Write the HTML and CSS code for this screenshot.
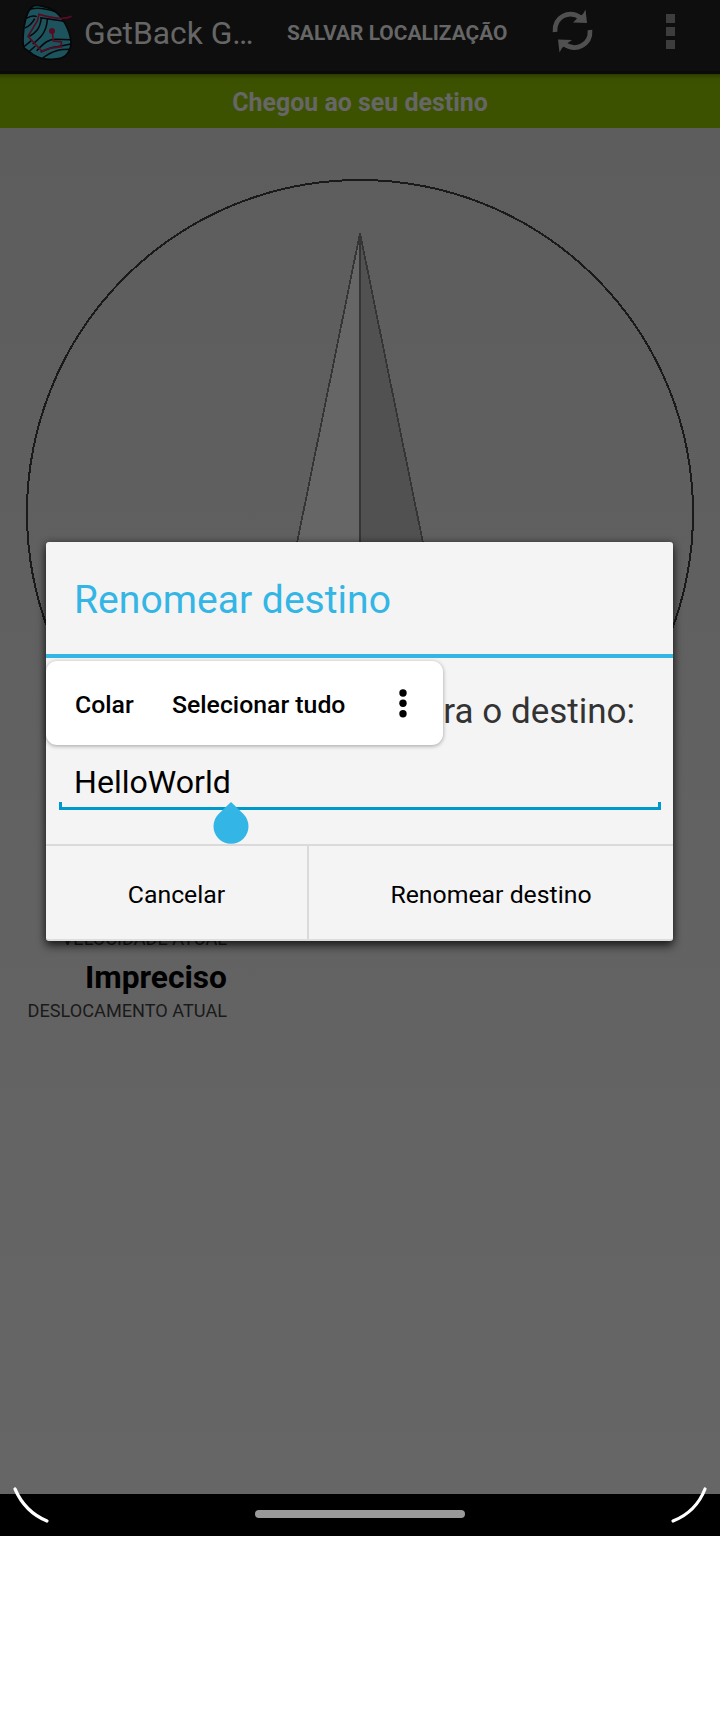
FILE: index.html
```html
<!DOCTYPE html>
<html lang="pt">
<head>
<meta charset="utf-8">
<title>GetBack GPS</title>
<link rel="stylesheet" href="styles.css">
</head>
<body>
<div class="screen">
  <header class="appbar">
    <svg class="logo" width="54" height="60" viewBox="0 0 162 180">
      <path d="M40 12C50 8 85 14 105 28C130 48 150 85 153 120C153 145 140 167 115 170C85 175 60 170 40 158L12 138C6 120 10 95 12 75C16 50 25 20 40 12Z" fill="#1d535d" stroke="#050808" stroke-width="5"/>
      <g fill="none" stroke="#050808" stroke-width="4.5">
        <path d="M30 22C50 16 80 20 108 30M19 49C30 42 42 40 50 44M60 47C85 51 110 54 130 58M14 78C26 74 36 66 44 50M64 48C60 80 48 92 28 103M82 52C80 90 62 108 38 126M152 113L108 112C88 112 76 118 50 146M12 134L34 116M152 126L112 134C92 134 80 144 62 150M26 150L46 132M150 142C120 142 100 144 68 168"/>
      </g>
      <path d="M155 43C135 54 105 50 57 37L52 57L24 103L66 148L88 139L124 134V120L100 117L97 88" fill="none" stroke="#570b22" stroke-width="5"/>
      <circle cx="96" cy="87" r="9" fill="#570b22"/>
    </svg>
    <h1 class="app-title">GetBack G…</h1>
    <span class="save">SALVAR LOCALIZAÇÃO</span>
    <svg class="refresh" width="48" height="50" viewBox="0 0 48 50">
      <path d="M6 27C5 12 20 4 32 13M41 25C42 40 27 47 15 39" fill="none" stroke="#505050" stroke-width="4.7"/>
      <path d="M36.500 4.500L38 18L24 17.500L28.500 13L34 9ZM10.500 47.500L9 34.500L23 35L18 38.500L13 43Z" fill="#505050"/>
    </svg>
    <span class="overflow"><i></i><i></i><i></i></span>
  </header>
  <div class="banner">Chegou ao seu destino</div>
  <main class="content">
    <svg class="compass" width="720" height="740" viewBox="0 128 720 740" shape-rendering="crispEdges">
      <circle cx="360" cy="513" r="333" fill="none" stroke="#1a1a1a" stroke-width="2"/>
      <path d="M360 233L297 543H360Z" fill="#666"/>
      <path d="M360 233L423 543H360Z" fill="#515151"/>
      <path d="M297 543L360 233L423 543M360 233V543" fill="none" stroke="#353535" stroke-width="1.8"/>
    </svg>
    <div class="stats">
      <span class="label">VELOCIDADE ATUAL</span>
      <strong class="value">Impreciso</strong>
      <span class="label">DESLOCAMENTO ATUAL</span>
    </div>
  </main>
  <footer class="navbar"><span class="pill"></span></footer>

  <svg class="corner corner-left" width="40" height="40" viewBox="0 0 40 40"><path d="M4 4Q14 27 36 36" /></svg>
  <svg class="corner corner-right" width="40" height="40" viewBox="0 0 40 40"><path d="M36 4Q27 27 4 36" /></svg>

  <section class="dialog">
    <h2 class="dialog-title">Renomear destino</h2>
    <div class="dialog-body">
      <p class="message">ra o destino:</p>
      <div class="field">HelloWorld</div>
    </div>
    <div class="actions">
      <span class="action cancel">Cancelar</span>
      <span class="action confirm">Renomear destino</span>
    </div>
    <div class="popup">
      <span class="paste">Colar</span>
      <span class="select-all">Selecionar tudo</span>
      <svg class="more" width="8" height="30" viewBox="0 0 8 30"><circle cx="4" cy="5" r="3.7"/><circle cx="4" cy="15.3" r="3.7"/><circle cx="4" cy="25.7" r="3.7"/></svg>
    </div>
    <svg class="handle" width="36" height="42" viewBox="0 0 36 42"><path d="M18 0L5.6 12A17.5 17.5 0 1 0 30.4 12Z" fill="#33b5e5"/></svg>
  </section>
</div>
</body>
</html>
```
FILE: styles.css
```css
* { box-sizing: border-box; }
body { margin: 0; background: #fff; font-family: Roboto, sans-serif; }
h1, h2, p { margin: 0; font-weight: 400; }

.screen { position: relative; width: 720px; height: 1536px; display: flex; flex-direction: column; overflow: hidden; background: #000; white-space: nowrap; }

.appbar { height: 74px; flex: none; display: flex; align-items: flex-start; padding-left: 20px; background: #0e0e0e; border-bottom: 3px solid #0a0a0a; color: #666; }
.logo { flex: none; margin-top: 2px; }
.app-title { width: 202px; flex: none; padding-left: 10px; font-size: 31.8px; line-height: 67px; }
.save { width: 264px; flex: none; padding-left: 11px; font-size: 20.9px; font-weight: 700; line-height: 66px; }
.refresh { flex: none; margin: 5px 0 0 9px; }
.overflow { margin: 14px 0 0 69px; display: flex; flex-direction: column; gap: 4px; }
.overflow i { width: 9px; height: 9px; background: #3d3d3d; }

.banner { height: 54px; flex: none; background: linear-gradient(#2c3b00, #3b5000 5px, #3d5200 12px); color: #666; font-size: 24.95px; font-weight: 700; line-height: 58px; text-align: center; }

.content { flex: 1; background: linear-gradient(#5d5d5d, #666); }
.compass { display: block; }
.stats { width: 227px; margin-top: 59px; display: flex; flex-direction: column; text-align: right; color: #1a1a1a; }
.label { font-size: 18.15px; line-height: 24px; }
.value { margin-top: 7px; font-size: 31.7px; line-height: 40px; color: #000; }
.value + .label { margin-top: 1px; }

.navbar { height: 42px; flex: none; display: flex; justify-content: center; padding-top: 16px; }
.pill { width: 210px; height: 8px; border-radius: 4px; background: #999; }
.corner { position: absolute; top: 1485px; fill: none; stroke: #fff; stroke-width: 3.2; stroke-linecap: round; }
.corner-left { left: 11px; }
.corner-right { right: 11px; }

.dialog { position: absolute; left: 46px; top: 542px; width: 627px; height: 399px; display: flex; flex-direction: column; background: #f4f4f4; border-radius: 3px; border-bottom: 2px solid #ddd; box-shadow: 0 5px 10px rgba(0,0,0,.65), 0 0 7px rgba(0,0,0,.35); }
.dialog-title { height: 116px; flex: none; padding-left: 28px; border-bottom: 4px solid #33b5e5; color: #33b5e5; font-size: 39.1px; line-height: 116px; }
.dialog-body { height: 188px; flex: none; border-bottom: 2px solid #dadada; }
.message { padding: 28px 38px 0 0; font-size: 35px; line-height: 51px; text-align: right; color: #333; }
.field { margin: 23px 12px 0 13px; height: 50px; padding-left: 15px; font-size: 32.1px; line-height: 45px; color: #000; background: linear-gradient(#0099cc, #0099cc) 0 100% / 3px 8px no-repeat, linear-gradient(#0099cc, #0099cc) 100% 100% / 3px 8px no-repeat, linear-gradient(#0099cc, #0099cc) 0 100% / 100% 3px no-repeat; }
.actions { height: 93px; flex: none; display: flex; font-size: 24.8px; line-height: 97px; text-align: center; color: #000; }
.action { height: 93px; }
.cancel { width: 263px; border-right: 2px solid #dadada; }
.confirm { flex: 1; }

.popup { position: absolute; left: 0; top: 119px; width: 397px; height: 84px; display: flex; align-items: center; border-radius: 11px; background: #fff; box-shadow: 0 1px 4px rgba(0,0,0,.35); font-size: 24.8px; font-weight: 500; color: #000; line-height: 88px; }
.paste { width: 126px; padding: 3px 0 0 29px; }
.select-all { width: 227px; padding-top: 3px; }
.more { fill: #000; }
.handle { position: absolute; left: 167px; top: 260px; }
```
